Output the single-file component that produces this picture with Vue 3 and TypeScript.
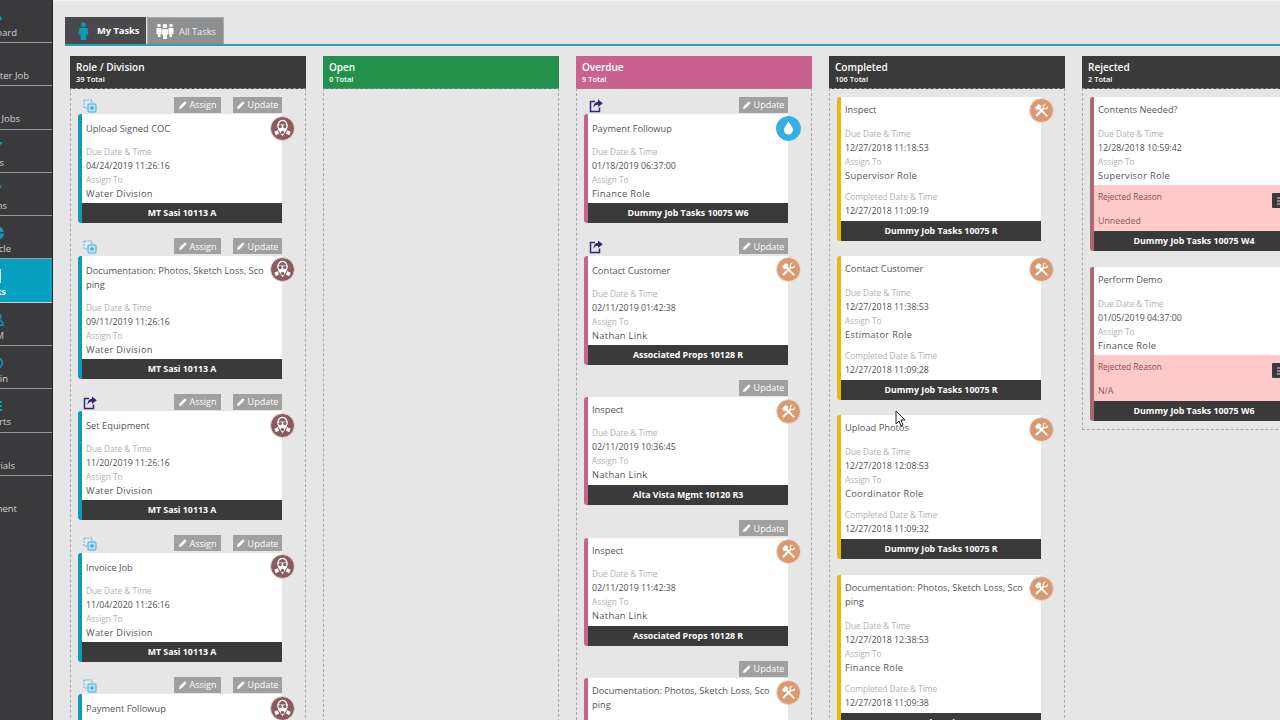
<script setup lang="ts">
interface Task {
  title: string
  due: string
  assign: string
  job: string
  icon: 'mask' | 'tools' | 'drop'
  flag?: 'copy' | 'share'
  canAssign?: boolean
  tight?: boolean
  completed?: string
  reason?: string
}

interface Column {
  name: string
  total: string
  tone: string
  tasks: Task[]
}

// side menu glyphs, only the right edge of them shows because the menu is slid off screen
const navGlyphs: Record<string, string> = {
  gauge: 'M1 11a6 6 0 1 1 12 0h-2a4 4 0 1 0-8 0z',
  funnel: 'M0 3h14l-5 6v5H5V9z',
  person: 'M7 1l2 5 4-4-3 8v5H5v-5L1 2l4 4z',
  globe: 'M7 1a7 7 0 1 0 0 14A7 7 0 0 0 7 1zM0 7h14v1.500H0z',
  page: 'M3 1h11v14H3zM5 3v10h7V3z',
  user: 'M7 1a3.500 3.500 0 0 1 2 6.400c2.500 1 4 3 4 6.600H1c0-3.600 1.500-5.600 4-6.600A3.500 3.500 0 0 1 7 1zm0 1.500a2 2 0 1 0 0 4 2 2 0 0 0 0-4zM7 8.500c-2.500 0-4 1.500-4.300 4h8.600C11 10 9.500 8.500 7 8.500z',
  ring: 'M7 2a6 6 0 1 0 0 12A6 6 0 0 0 7 2zm0 1.500a4.500 4.500 0 1 1 0 9 4.500 4.500 0 0 1 0-9zM7 6a2 2 0 1 0 0 4 2 2 0 0 0 0-4z',
  bars: 'M1 3h12v2H1zM5 7h8v2H5zM3 11h10v2H3z',
  dot: 'M7 4a3.500 3.500 0 1 0 0 7 3.500 3.500 0 0 0 0-7z',
}

const navItems = [
  { label: 'Dashboard', end: 17, iconEnd: 3, glyph: 'gauge' },
  { label: 'Enter Job', end: 29, iconEnd: 0, glyph: '' },
  { label: 'Jobs', end: 20, iconEnd: 0, glyph: '' },
  { label: 'Leads', end: 4, iconEnd: 3, glyph: 'funnel' },
  { label: 'Actions', end: 7, iconEnd: 3, glyph: 'person' },
  { label: 'Vehicle', end: 11, iconEnd: 4, glyph: 'globe' },
  { label: 'Tasks', end: 6, iconEnd: 1, glyph: 'page', active: true },
  { label: 'CRM', end: 4, iconEnd: 5, glyph: 'user' },
  { label: 'Admin', end: 8, iconEnd: 4, glyph: 'ring' },
  { label: 'Reports', end: 11, iconEnd: 3, glyph: 'bars' },
  { label: 'Materials', end: 15, iconEnd: 0, glyph: '' },
  { label: 'Equipment', end: 17, iconEnd: 1, glyph: 'dot' },
]

const water = (title: string, due: string, flag: 'copy' | 'share' = 'copy'): Task => ({
  title,
  due,
  flag,
  assign: 'Water Division',
  job: 'MT Sasi 10113 A',
  icon: 'mask',
  canAssign: true,
})

const columns: Column[] = [
  {
    name: 'Role / Division',
    total: '39 Total',
    tone: 'role',
    tasks: [
      water('Upload Signed COC', '04/24/2019 11:26:16'),
      water('Documentation: Photos, Sketch Loss, Scoping', '09/11/2019 11:26:16'),
      water('Set Equipment', '11/20/2019 11:26:16', 'share'),
      water('Invoice Job', '11/04/2020 11:26:16'),
      water('Payment Followup', '11/04/2020 11:26:16'),
    ],
  },
  { name: 'Open', total: '0 Total', tone: 'open', tasks: [] },
  {
    name: 'Overdue',
    total: '9 Total',
    tone: 'overdue',
    tasks: [
      { title: 'Payment Followup', due: '01/18/2019 06:37:00', assign: 'Finance Role', job: 'Dummy Job Tasks 10075 W6', icon: 'drop', flag: 'share' },
      { title: 'Contact Customer', due: '02/11/2019 01:42:38', assign: 'Nathan Link', job: 'Associated Props 10128 R', icon: 'tools', flag: 'share' },
      { title: 'Inspect', due: '02/11/2019 10:36:45', assign: 'Nathan Link', job: 'Alta Vista Mgmt 10120 R3', icon: 'tools', tight: true },
      { title: 'Inspect', due: '02/11/2019 11:42:38', assign: 'Nathan Link', job: 'Associated Props 10128 R', icon: 'tools', tight: true },
      { title: 'Documentation: Photos, Sketch Loss, Scoping', due: '02/11/2019 12:38:00', assign: 'Finance Role', job: 'Dummy Job Tasks 10075 R', icon: 'tools', tight: true },
    ],
  },
  {
    name: 'Completed',
    total: '106 Total',
    tone: 'completed',
    tasks: [
      { title: 'Inspect', due: '12/27/2018 11:18:53', assign: 'Supervisor Role', job: 'Dummy Job Tasks 10075 R', icon: 'tools', completed: '12/27/2018 11:09:19', tight: true },
      { title: 'Contact Customer', due: '12/27/2018 11:38:53', assign: 'Estimator Role', job: 'Dummy Job Tasks 10075 R', icon: 'tools', completed: '12/27/2018 11:09:28', tight: true },
      { title: 'Upload Photos', due: '12/27/2018 12:08:53', assign: 'Coordinator Role', job: 'Dummy Job Tasks 10075 R', icon: 'tools', completed: '12/27/2018 11:09:32', tight: true },
      { title: 'Documentation: Photos, Sketch Loss, Scoping', due: '12/27/2018 12:38:53', assign: 'Finance Role', job: 'Dummy Job Tasks 10075 R', icon: 'tools', completed: '12/27/2018 11:09:38', tight: true },
    ],
  },
  {
    name: 'Rejected',
    total: '2 Total',
    tone: 'rejected',
    tasks: [
      { title: 'Contents Needed?', due: '12/28/2018 10:59:42', assign: 'Supervisor Role', job: 'Dummy Job Tasks 10075 W4', icon: 'tools', reason: 'Unneeded', tight: true },
      { title: 'Perform Demo', due: '01/05/2019 04:37:00', assign: 'Finance Role', job: 'Dummy Job Tasks 10075 W6', icon: 'tools', reason: 'N/A', tight: true },
    ],
  },
]
</script>

<template>
  <div class="page">
    <nav class="sidebar">
      <div v-for="item in navItems" :key="item.label" class="nav-item" :class="{ active: item.active }">
        <div class="nav-icon" :style="{ width: item.iconEnd + 'px' }">
          <svg v-if="item.glyph" width="14" height="16" viewBox="0 0 14 16">
            <path :d="navGlyphs[item.glyph]" fill="currentColor" fill-rule="evenodd" />
          </svg>
        </div>
        <div class="nav-label" :style="{ width: item.end + 'px' }">{{ item.label }}</div>
      </div>
    </nav>

    <main class="main">
      <div class="tabs">
        <button class="tab tab-on">
          <svg width="11" height="18" viewBox="0 0 11 18">
            <circle cx="5.500" cy="2.600" r="2.400" fill="#0e9ab8" />
            <path d="M1.500 6h8l1 6-2 .5L8 18H3l-.5-5.500-2-.5z" fill="#0e9ab8" />
          </svg>
          My Tasks
        </button>
        <button class="tab tab-off">
          <svg width="18" height="16" viewBox="0 0 18 16">
            <g fill="#fff">
              <circle cx="3" cy="2.500" r="1.800" />
              <circle cx="15" cy="2.500" r="1.800" />
              <path d="M.5 5h5v6l-1 .5V14H2v-2.500l-1.500-.5zM12.500 5h5v5.500L16 11.500V14h-2.500v-2.500l-1-.5z" />
              <circle cx="9" cy="3" r="2.300" />
              <path d="M6 6.200h6v5.300l-1 .5V16H7v-4l-1-.5z" />
            </g>
          </svg>
          All Tasks
        </button>
      </div>

      <div class="board">
        <section v-for="col in columns" :key="col.name" class="column" :class="col.tone">
          <header class="col-head">
            <div class="col-name">{{ col.name }}</div>
            <div class="col-total">{{ col.total }}</div>
          </header>

          <div class="col-body">
            <div v-for="(task, i) in col.tasks" :key="i" class="task">
              <div v-if="task.flag || col.tone === 'overdue'" class="task-actions">
                <span class="flag">
                  <svg v-if="task.flag === 'copy'" width="14" height="14" viewBox="0 0 14 14">
                    <rect x="1" y="1" width="8" height="8" fill="none" stroke="#55b9e6" stroke-dasharray="2 1" />
                    <rect x="5" y="5" width="8" height="8" rx="1" fill="#bfe5f6" stroke="#36ade3" />
                    <circle cx="9" cy="9" r="1.800" fill="#36ade3" />
                  </svg>
                  <svg v-else-if="task.flag === 'share'" width="14" height="14" viewBox="0 0 14 14">
                    <path d="M6 2.500H1.500v10h9V8.500" fill="none" stroke="#33277a" stroke-width="1.500" />
                    <path d="M9 .5l4.800 3.800L9 8V5.800C6.800 5.800 5.300 6.800 4.500 9 4.500 5.500 6 3 9 2.800z" fill="#33277a" />
                  </svg>
                </span>
                <button v-if="task.canAssign" class="action assign">
                  <svg width="8" height="8" viewBox="0 0 8 8"><path d="M0 8l.6-2.400L5.400.8a.8.8 0 0 1 1.100 0l.7.7a.8.8 0 0 1 0 1.100L2.400 7.400z" fill="#fff" /></svg>
                  Assign
                </button>
                <button class="action update">
                  <svg width="8" height="8" viewBox="0 0 8 8"><path d="M0 8l.6-2.400L5.400.8a.8.8 0 0 1 1.100 0l.7.7a.8.8 0 0 1 0 1.100L2.400 7.400z" fill="#fff" /></svg>
                  Update
                </button>
              </div>

              <article class="card" :class="{ tight: task.tight }">
                <span v-if="!task.reason" class="badge" :class="task.icon">
                  <svg v-if="task.icon === 'mask'" width="19" height="19" viewBox="0 0 17 17">
                    <path d="M4.600 8C3.600 3.500 6 1.300 8.500 1.300S13.400 3.500 12.400 8" fill="none" stroke="#fff" stroke-width="1.100" />
                    <path d="M4.200 5h8.600l-.4 4.500L8.500 15.500 4.600 9.500z" fill="#fff" />
                    <circle cx="6.400" cy="6.700" r="1.500" fill="#8a5c5e" />
                    <circle cx="10.600" cy="6.700" r="1.500" fill="#8a5c5e" />
                    <circle cx="8.500" cy="12" r="1.500" fill="#8a5c5e" />
                    <path d="M1.200 11.500l3-1.500 1.300 3-3 1.500zM15.800 11.500l-3-1.500-1.300 3 3 1.500z" fill="#fff" />
                  </svg>
                  <svg v-else-if="task.icon === 'tools'" width="15" height="15" viewBox="0 0 15 15">
                    <path d="M5 5l8.300 8.300" stroke="#fff" stroke-width="1.800" />
                    <path d="M1 4.600L4.600 1l3 2-1 1 .4.400L4.400 7 4 6.600 3 7.600z" fill="#fff" />
                    <path d="M10 5L2 13" stroke="#fff" stroke-width="2.200" />
                    <path d="M14 2.900l-2.200 2.200-1.700-.4-.4-1.700L11.900.8C9.800.3 8.300 2 8.800 4.200l2 2c2.200.5 3.700-1.200 3.200-3.300z" fill="#fff" />
                  </svg>
                  <svg v-else width="11" height="14" viewBox="0 0 11 14">
                    <path d="M5.500.5C3.800 3.500 1 6 1 9a4.500 4.500 0 0 0 9 0C10 6 7.200 3.500 5.500.5z" fill="#fff" />
                  </svg>
                </span>

                <div class="card-main">
                  <div class="task-title">{{ task.title }}</div>
                  <div class="label">Due Date &amp; Time</div>
                  <div class="value">{{ task.due }}</div>
                  <div class="label">Assign To</div>
                  <div class="value person">{{ task.assign }}</div>
                  <template v-if="task.completed">
                    <div class="label done-label">Completed Date &amp; Time</div>
                    <div class="value">{{ task.completed }}</div>
                  </template>
                </div>

                <div v-if="task.reason" class="reason">
                  <svg class="note" width="16" height="16" viewBox="0 0 16 16">
                    <rect width="16" height="15" rx="1" fill="#3a3a3a" />
                    <path d="M5 5h11M5 8h11M5 11h11" stroke="#ffc9c9" stroke-width="1.200" />
                  </svg>
                  <div class="reason-label">Rejected Reason</div>
                  <div class="reason-text">{{ task.reason }}</div>
                </div>

                <footer class="card-foot">{{ task.job }}</footer>
              </article>
            </div>
          </div>
        </section>
      </div>
    </main>

    <svg class="cursor" width="12" height="17" viewBox="0 0 12 17">
      <path d="M1 1v13l3-3 2 5 2-1-2-5h4z" fill="#fff" stroke="#222" stroke-width="1" />
    </svg>
  </div>
</template>

<style scoped>
.page {
  position: relative;
  display: flex;
  width: 1280px;
  height: 720px;
  overflow: hidden;
  background: #e6e6e6;
  font-family: "Open Sans", "Liberation Sans", sans-serif;
}

.sidebar {
  flex: none;
  width: 52px;
  background: #3a3a3c;
  border-right: 1px solid #262626;
  overflow: hidden;
}
.nav-item {
  height: 43.300px;
  box-sizing: border-box;
  padding-top: 9px;
  border-bottom: 1.500px solid #9a9a9a;
  color: #0e9ab8;
}
.nav-item:first-child {
  height: 43px;
}
.nav-item:last-child {
  border-bottom: none;
}
.nav-item.active {
  background: #08a0c0;
  color: #d6f0f6;
  border-bottom-color: #d0d0d0;
}
.nav-icon {
  display: flex;
  justify-content: flex-end;
  height: 16px;
}
.nav-icon svg {
  flex: none;
}
.nav-label {
  display: flex;
  justify-content: flex-end;
  white-space: nowrap;
  font-size: 9.500px;
  line-height: 13px;
  margin-top: 1px;
  color: #d2d2d2;
}
.nav-item.active .nav-label {
  color: #fff;
  font-weight: 700;
}

.main {
  flex: 1;
  min-width: 0;
  padding: 17px 0 0 12px;
  border-top: 1px solid #f2f2f2;
  box-sizing: border-box;
}

.tabs {
  display: flex;
  gap: 1px;
  height: 27px;
  margin-top: -1px;
  border-bottom: 2px solid #2ca0b8;
}
.tab {
  display: flex;
  align-items: center;
  height: 27px;
  border: none;
  font-family: inherit;
  font-size: 9.300px;
  color: #fff;
  padding: 0;
}
.tab-on {
  width: 81px;
  gap: 8px;
  padding-left: 13px;
  background: #4a4a4c;
  font-weight: 700;
}
.tab-off {
  width: 77px;
  gap: 5px;
  padding-left: 8px;
  background: #8d8f90;
  border: 1px solid #a8a8a8;
  border-bottom: none;
  color: #eee;
}

.board {
  display: flex;
  gap: 17px;
  height: 676px;
  padding: 10px 0 0 5px;
  box-sizing: border-box;
}
.column {
  flex: none;
  display: flex;
  flex-direction: column;
  width: 236px;
}
.col-head {
  flex: none;
  height: 33px;
  padding: 5px 6px 0;
  box-sizing: border-box;
  background: #3a3a3a;
  color: #fff;
}
.open .col-head {
  background: #23914b;
}
.overdue .col-head {
  background: #c9628f;
}
.col-name {
  font-size: 10px;
  line-height: 13px;
  font-weight: 600;
}
.col-total {
  font-size: 7.500px;
  line-height: 11px;
  font-weight: 600;
}
.col-body {
  flex: 1;
  padding: 7.600px 0 0 7px;
  border: 1px dashed #a8a8a8;
  border-top: 1px dashed #8a8a8a;
  border-bottom: none;
  margin-top: -1px;
}
.rejected .col-body {
  flex: none;
  height: 342px;
  border-bottom: 1px dashed #a8a8a8;
  box-sizing: border-box;
}

.task {
  width: 204px;
  margin-bottom: 15px;
}
.completed .task {
  margin-bottom: 15.400px;
}
.rejected .task {
  margin-bottom: 16px;
}
.task-actions {
  display: flex;
  justify-content: flex-end;
  gap: 12px;
  height: 16.500px;
  margin-bottom: 1px;
}
.flag {
  margin: -1px auto 0 5px;
  height: 14px;
}
.action {
  display: flex;
  align-items: center;
  justify-content: center;
  gap: 3px;
  padding: 0;
  height: 16px;
  border: none;
  background: #a0a0a0;
  color: #fff;
  font-family: inherit;
  font-size: 9px;
  white-space: nowrap;
}
.assign {
  width: 47px;
}
.update {
  width: 49px;
}

.card {
  position: relative;
  display: flex;
  flex-direction: column;
  background: #fff;
  border-left: 4px solid #0e9ab8;
  border-radius: 3px 0 0 3px;
}
.overdue .card {
  border-left-color: #c9628f;
}
.completed .card {
  border-left-color: #eab90f;
}
.rejected .card {
  border-left-color: #a86a6d;
}
.card-main {
  padding: 8px 16px 2px 4px;
}
.task-title {
  font-size: 9.300px;
  line-height: 14px;
  margin-bottom: 9px;
  word-break: break-all;
  color: #555;
}
.card.tight .card-main {
  padding-top: 6px;
  padding-bottom: 3px;
}
.rejected .card.tight .card-main {
  padding-bottom: 2px;
}
.completed .card.tight .task-title,
.rejected .card.tight .task-title {
  margin-bottom: 10px;
}
.label {
  font-size: 8.300px;
  line-height: 14px;
  color: #b0b0b0;
}
.done-label {
  margin-top: 7px;
}
.value {
  font-size: 8.800px;
  line-height: 14px;
  color: #4f4f4f;
}
.person {
  font-size: 9.300px;
  letter-spacing: 0.3px;
  color: #555;
}
.badge {
  position: absolute;
  top: 1.500px;
  right: -13px;
  display: flex;
  align-items: center;
  justify-content: center;
  width: 25px;
  height: 25px;
  box-sizing: border-box;
  border-radius: 50%;
  border: 1px solid #ecdcd4;
}
.badge.mask {
  background: #8a5c5e;
}
.badge.tools {
  background: #d99a70;
}
.badge.drop {
  background: #35aee2;
  border-color: #35aee2;
}
.reason {
  position: relative;
  height: 46px;
  padding: 5px 4px 0;
  box-sizing: border-box;
  background: #ffc9c9;
}
.note {
  position: absolute;
  top: 8px;
  right: 6px;
}
.reason-label {
  font-size: 8.300px;
  line-height: 13px;
  color: #8a4a50;
}
.reason-text {
  margin-top: 12px;
  font-size: 8.800px;
  line-height: 13px;
  color: #8a5a5e;
}
.card-foot {
  height: 20px;
  line-height: 20px;
  text-align: center;
  background: #3a3a3a;
  color: #fff;
  font-size: 8.800px;
  font-weight: 700;
  white-space: nowrap;
}

.cursor {
  position: absolute;
  left: 895px;
  top: 410px;
}
</style>

<style>
html,
body {
  margin: 0;
  overflow: hidden;
}
</style>
